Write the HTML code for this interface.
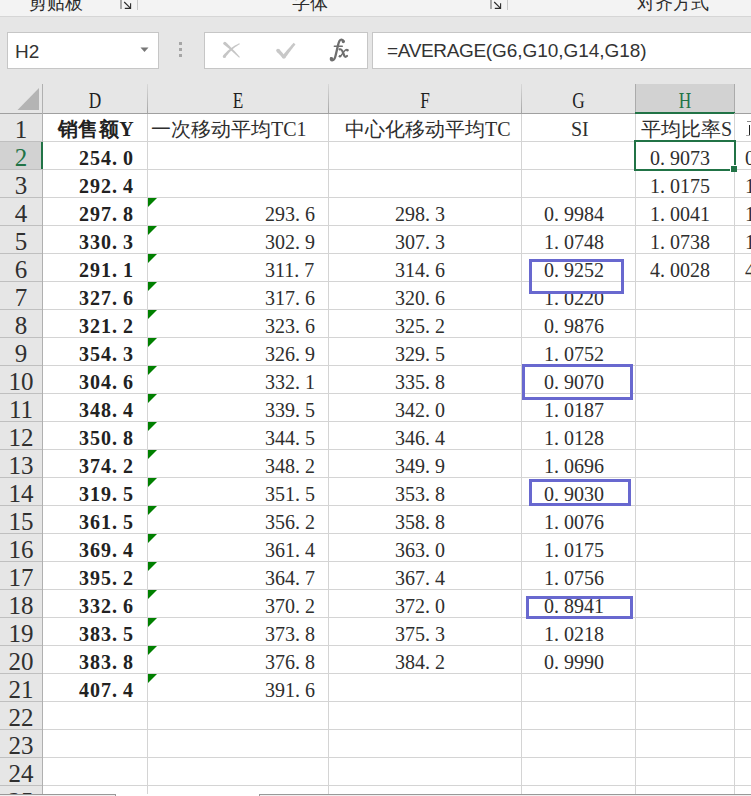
<!DOCTYPE html>
<html><head><meta charset="utf-8"><style>
*{margin:0;padding:0;box-sizing:border-box}
html,body{width:751px;height:796px;overflow:hidden;background:#e6e6e6;position:relative}
div,span{position:absolute}
.ui{font-family:"Liberation Sans",sans-serif}
.sr{font-family:"Liberation Serif",serif}
.rib{left:0;top:0;width:751px;height:17px;background:#f3f3f3;border-bottom:1px solid #d6d6d6}
.rt{font-size:18px;color:#2b2b2b;line-height:18px;top:-6px;white-space:nowrap}
.box{background:#fff;border:1px solid #c6c6c6}
.grid{left:43px;top:114px;width:708px;height:682px;background:#fff}
.vl{width:1px;background:#d4d4d4}
.hl{height:1px;background:#d4d4d4}
.rh{left:0;width:42px;height:27px;background:#e6e6e6;font-size:25px;line-height:31px;text-align:center;color:#1f1f1f}
.rhl{left:0;width:42px;height:1px;background:#bfbfbf}
.ch{top:86px;height:29px;font-size:24px;line-height:29px;text-align:center;color:#1f1f1f;transform:scaleX(0.72)}
.chs{top:84px;width:1px;height:29px;background:linear-gradient(#d8d8d8,#a6a6a6)}
.c{font-size:20px;line-height:28px;height:28px;white-space:nowrap;color:#2e2e2e}
.c i{font-style:normal;margin-right:5px}
.b{font-weight:bold;letter-spacing:1px;color:#222}
.tri{width:0;height:0;border-top:9px solid #008000;border-right:9px solid transparent}
.fm{top:37.6px;font-size:19px;line-height:26px;color:#333;white-space:nowrap}
.sel{border:3px solid #6868cf}
</style></head><body>

<div class="rib"></div>
<div class="ui rt" style="left:29px">剪贴板</div>
<div class="ui rt" style="left:292px">字体</div>
<div class="ui rt" style="left:637px">对齐方式</div>
<div style="left:120px;top:0;width:2px;height:9px;background:#a8a8a8"></div>
<svg style="position:absolute;left:123px;top:1px" width="10" height="10" viewBox="0 0 10 10"><path d="M1.2 1 L7.4 7.2 M1.8 7.4 H7.6 V2.2" fill="none" stroke="#2a2a2a" stroke-width="1.1"/></svg>
<div style="left:137px;top:0;width:1px;height:10px;background:#c8c8c8"></div>
<div style="left:490px;top:0;width:2px;height:9px;background:#a8a8a8"></div>
<svg style="position:absolute;left:493px;top:1px" width="10" height="10" viewBox="0 0 10 10"><path d="M1.2 1 L7.4 7.2 M1.8 7.4 H7.6 V2.2" fill="none" stroke="#2a2a2a" stroke-width="1.1"/></svg>
<div style="left:507px;top:0;width:1px;height:10px;background:#c8c8c8"></div>
<div class="box" style="left:7px;top:32px;width:152px;height:37px"></div>
<div class="ui" style="left:15px;top:39px;font-size:19px;line-height:26px;color:#333">H2</div>
<svg style="position:absolute;left:140px;top:47px" width="9" height="6"><path d="M0.5 0.5 H8.5 L4.5 5 Z" fill="#777"/></svg>
<div style="left:179px;top:42px;width:3px;height:3px;background:#a6a6a6"></div>
<div style="left:179px;top:48px;width:3px;height:3px;background:#a6a6a6"></div>
<div style="left:179px;top:54px;width:3px;height:3px;background:#a6a6a6"></div>
<div class="box" style="left:204px;top:32px;width:164px;height:37px"></div>
<svg style="position:absolute;left:220px;top:40px" width="24" height="20" viewBox="0 0 24 20"><g fill="#c6c6c6"><path d="M3.81 4.43 L4.75 5.17 L5.68 5.93 L6.62 6.69 L7.57 7.47 L8.51 8.27 L9.46 9.07 L10.41 9.89 L11.37 10.71 L12.32 11.56 L13.28 12.41 L14.25 13.27 L15.21 14.15 L16.18 15.04 L17.15 15.94 L18.13 16.86 L19.10 17.78 L19.90 17.02 L19.00 16.01 L18.11 15.01 L17.22 14.02 L16.33 13.04 L15.44 12.07 L14.55 11.11 L13.67 10.17 L12.78 9.24 L11.90 8.31 L11.02 7.40 L10.15 6.50 L9.27 5.61 L8.40 4.74 L7.53 3.87 L6.66 3.01 L5.79 2.17Z"/><path d="M5.50 17.40 L6.21 16.37 L6.95 15.37 L7.71 14.40 L8.49 13.45 L9.30 12.53 L10.13 11.64 L10.98 10.78 L11.86 9.94 L12.77 9.14 L13.70 8.35 L14.66 7.60 L15.64 6.87 L16.64 6.18 L17.68 5.51 L18.73 4.86 L19.82 4.25 L19.38 3.35 L18.21 3.87 L17.07 4.42 L15.94 5.00 L14.83 5.61 L13.74 6.26 L12.67 6.94 L11.62 7.66 L10.59 8.41 L9.58 9.19 L8.59 10.00 L7.62 10.85 L6.67 11.74 L5.75 12.65 L4.84 13.60 L3.96 14.59 L3.10 15.60Z"/><circle cx="4.8" cy="3.3" r="1.5"/><circle cx="4.3" cy="16.5" r="1.5"/></g></svg>
<svg style="position:absolute;left:274px;top:40px" width="24" height="20" viewBox="0 0 24 20"><g fill="#c8c8c8"><path d="M2.75 11.89 L3.74 12.83 L4.72 13.79 L5.69 14.79 L6.65 15.83 L7.61 16.90 L8.55 18.00 L11.05 16.00 L10.12 14.80 L9.17 13.64 L8.21 12.51 L7.24 11.41 L6.25 10.34 L5.25 9.31Z"/><path d="M11.04 18.28 L12.07 16.82 L13.10 15.38 L14.13 13.95 L15.17 12.54 L16.22 11.14 L17.26 9.76 L18.32 8.40 L19.37 7.05 L20.44 5.71 L21.50 4.39 L19.70 2.81 L18.53 4.07 L17.36 5.34 L16.20 6.63 L15.04 7.93 L13.88 9.26 L12.73 10.60 L11.58 11.95 L10.44 13.32 L9.30 14.71 L8.16 16.12Z"/><circle cx="9.8" cy="17.0" r="1.8"/><circle cx="4.0" cy="10.6" r="1.8"/></g></svg>
<svg style="position:absolute;left:326px;top:36px" width="26" height="28" viewBox="0 0 26 28"><g fill="none" stroke="#6e6e6e" stroke-linecap="round"><path d="M17.6 5.2 C16.8 3.2 14.6 3 13.4 5 C12.6 6.4 12.2 8.5 11.6 11 L9.6 19.5 C9 22.3 8 24.3 6.2 24.3 C5 24.3 4.6 23.2 5 22.3" stroke-width="2.3"/><path d="M8.3 10.2 H16.3" stroke-width="1.4"/><path d="M13.6 13.4 C15.5 12.8 16 14 17 16.5 L18.2 19.5 C18.8 21 19.6 21.2 21 20" stroke-width="2.2"/><path d="M21.8 13.8 C20.5 13 19.5 13.6 18 15.5 L15.5 19 C14.6 20.2 13.8 20.8 13.2 20.3" stroke-width="1.3"/></g><circle cx="17.3" cy="5.6" r="1.6" fill="#6e6e6e"/><circle cx="5.6" cy="22.6" r="1.6" fill="#6e6e6e"/><circle cx="21.4" cy="14.2" r="1.2" fill="#6e6e6e"/><circle cx="14" cy="20.2" r="1.2" fill="#6e6e6e"/></svg>
<div class="box" style="left:372px;top:32px;width:400px;height:37px"></div>
<div class="ui fm" style="left:387px;letter-spacing:-0.35px">=AVERAGE(</div>
<div class="ui fm" style="left:492px;letter-spacing:-0.05px">G6,G10,G14,G18)</div>
<div class="grid"></div>
<svg style="position:absolute;left:0;top:84px" width="42" height="29"><path d="M17.5 26 L39 4 L39 26 Z" fill="#b4b4b4"/></svg>
<div style="left:636px;top:84px;width:98px;height:29px;background:#d2d2d2"></div>
<div class="chs" style="left:42px"></div>
<div class="chs" style="left:147px"></div>
<div class="chs" style="left:328px"></div>
<div class="chs" style="left:521px"></div>
<div class="chs" style="left:635px;background:#ababab"></div>
<div class="chs" style="left:734px;background:#ababab"></div>
<div style="left:0;top:113px;width:635px;height:1px;background:#a0a0a0"></div>
<div style="left:635px;top:112px;width:100px;height:2px;background:#217346"></div>
<div style="left:734px;top:113px;width:17px;height:1px;background:#a0a0a0"></div>
<div class="sr ch" style="left:43px;width:104px;color:#1f1f1f">D</div>
<div class="sr ch" style="left:148px;width:180px;color:#1f1f1f">E</div>
<div class="sr ch" style="left:329px;width:192px;color:#1f1f1f">F</div>
<div class="sr ch" style="left:522px;width:113px;color:#1f1f1f">G</div>
<div class="sr ch" style="left:636px;width:98px;color:#217346">H</div>
<div class="sr ch" style="left:735px;width:99px;color:#1f1f1f">I</div>
<div class="vl" style="left:147px;top:114px;height:680px"></div>
<div class="vl" style="left:328px;top:114px;height:680px"></div>
<div class="vl" style="left:521px;top:114px;height:680px"></div>
<div class="vl" style="left:635px;top:114px;height:680px"></div>
<div class="vl" style="left:734px;top:114px;height:680px"></div>
<div style="left:42px;top:84px;width:1px;height:712px;background:#b0b0b0"></div>
<div class="hl" style="left:43px;top:141px;width:708px"></div>
<div class="rhl" style="top:141px"></div>
<div class="sr rh" style="top:114px;background:#e6e6e6;color:#303030">1</div>
<div class="hl" style="left:43px;top:169px;width:708px"></div>
<div class="rhl" style="top:169px"></div>
<div class="sr rh" style="top:142px;background:#d2d2d2;color:#217346">2</div>
<div class="hl" style="left:43px;top:197px;width:708px"></div>
<div class="rhl" style="top:197px"></div>
<div class="sr rh" style="top:170px;background:#e6e6e6;color:#303030">3</div>
<div class="hl" style="left:43px;top:225px;width:708px"></div>
<div class="rhl" style="top:225px"></div>
<div class="sr rh" style="top:198px;background:#e6e6e6;color:#303030">4</div>
<div class="hl" style="left:43px;top:253px;width:708px"></div>
<div class="rhl" style="top:253px"></div>
<div class="sr rh" style="top:226px;background:#e6e6e6;color:#303030">5</div>
<div class="hl" style="left:43px;top:281px;width:708px"></div>
<div class="rhl" style="top:281px"></div>
<div class="sr rh" style="top:254px;background:#e6e6e6;color:#303030">6</div>
<div class="hl" style="left:43px;top:309px;width:708px"></div>
<div class="rhl" style="top:309px"></div>
<div class="sr rh" style="top:282px;background:#e6e6e6;color:#303030">7</div>
<div class="hl" style="left:43px;top:337px;width:708px"></div>
<div class="rhl" style="top:337px"></div>
<div class="sr rh" style="top:310px;background:#e6e6e6;color:#303030">8</div>
<div class="hl" style="left:43px;top:365px;width:708px"></div>
<div class="rhl" style="top:365px"></div>
<div class="sr rh" style="top:338px;background:#e6e6e6;color:#303030">9</div>
<div class="hl" style="left:43px;top:393px;width:708px"></div>
<div class="rhl" style="top:393px"></div>
<div class="sr rh" style="top:366px;background:#e6e6e6;color:#303030">10</div>
<div class="hl" style="left:43px;top:421px;width:708px"></div>
<div class="rhl" style="top:421px"></div>
<div class="sr rh" style="top:394px;background:#e6e6e6;color:#303030">11</div>
<div class="hl" style="left:43px;top:449px;width:708px"></div>
<div class="rhl" style="top:449px"></div>
<div class="sr rh" style="top:422px;background:#e6e6e6;color:#303030">12</div>
<div class="hl" style="left:43px;top:477px;width:708px"></div>
<div class="rhl" style="top:477px"></div>
<div class="sr rh" style="top:450px;background:#e6e6e6;color:#303030">13</div>
<div class="hl" style="left:43px;top:505px;width:708px"></div>
<div class="rhl" style="top:505px"></div>
<div class="sr rh" style="top:478px;background:#e6e6e6;color:#303030">14</div>
<div class="hl" style="left:43px;top:533px;width:708px"></div>
<div class="rhl" style="top:533px"></div>
<div class="sr rh" style="top:506px;background:#e6e6e6;color:#303030">15</div>
<div class="hl" style="left:43px;top:561px;width:708px"></div>
<div class="rhl" style="top:561px"></div>
<div class="sr rh" style="top:534px;background:#e6e6e6;color:#303030">16</div>
<div class="hl" style="left:43px;top:589px;width:708px"></div>
<div class="rhl" style="top:589px"></div>
<div class="sr rh" style="top:562px;background:#e6e6e6;color:#303030">17</div>
<div class="hl" style="left:43px;top:617px;width:708px"></div>
<div class="rhl" style="top:617px"></div>
<div class="sr rh" style="top:590px;background:#e6e6e6;color:#303030">18</div>
<div class="hl" style="left:43px;top:645px;width:708px"></div>
<div class="rhl" style="top:645px"></div>
<div class="sr rh" style="top:618px;background:#e6e6e6;color:#303030">19</div>
<div class="hl" style="left:43px;top:673px;width:708px"></div>
<div class="rhl" style="top:673px"></div>
<div class="sr rh" style="top:646px;background:#e6e6e6;color:#303030">20</div>
<div class="hl" style="left:43px;top:701px;width:708px"></div>
<div class="rhl" style="top:701px"></div>
<div class="sr rh" style="top:674px;background:#e6e6e6;color:#303030">21</div>
<div class="hl" style="left:43px;top:729px;width:708px"></div>
<div class="rhl" style="top:729px"></div>
<div class="sr rh" style="top:702px;background:#e6e6e6;color:#303030">22</div>
<div class="hl" style="left:43px;top:757px;width:708px"></div>
<div class="rhl" style="top:757px"></div>
<div class="sr rh" style="top:730px;background:#e6e6e6;color:#303030">23</div>
<div class="hl" style="left:43px;top:785px;width:708px"></div>
<div class="rhl" style="top:785px"></div>
<div class="sr rh" style="top:758px;background:#e6e6e6;color:#303030">24</div>
<div class="hl" style="left:43px;top:813px;width:708px"></div>
<div class="rhl" style="top:813px"></div>
<div class="sr rh" style="top:786px;background:#e6e6e6;color:#303030">25</div>
<div style="left:41px;top:142px;width:2px;height:27px;background:#217346"></div>
<div class="sr c b" style="top:115px;left:58px"><span style="position:static;letter-spacing:0.4px">销售额Y</span></div>
<div class="sr c " style="top:115px;left:151px">一次移动平均TC1</div>
<div class="sr c " style="top:115px;left:345px">中心化移动平均TC</div>
<div class="sr c " style="top:115px;left:571px">SI</div>
<div class="sr c " style="top:115px;left:641px">平均比率S</div>
<div class="sr c b" style="top:144px;left:79px">254<i>.</i>0</div>
<div class="sr c b" style="top:172px;left:79px">292<i>.</i>4</div>
<div class="sr c b" style="top:200px;left:79px">297<i>.</i>8</div>
<div class="sr c b" style="top:228px;left:79px">330<i>.</i>3</div>
<div class="sr c b" style="top:256px;left:79px">291<i>.</i>1</div>
<div class="sr c b" style="top:284px;left:79px">327<i>.</i>6</div>
<div class="sr c b" style="top:312px;left:79px">321<i>.</i>2</div>
<div class="sr c b" style="top:340px;left:79px">354<i>.</i>3</div>
<div class="sr c b" style="top:368px;left:79px">304<i>.</i>6</div>
<div class="sr c b" style="top:396px;left:79px">348<i>.</i>4</div>
<div class="sr c b" style="top:424px;left:79px">350<i>.</i>8</div>
<div class="sr c b" style="top:452px;left:79px">374<i>.</i>2</div>
<div class="sr c b" style="top:480px;left:79px">319<i>.</i>5</div>
<div class="sr c b" style="top:508px;left:79px">361<i>.</i>5</div>
<div class="sr c b" style="top:536px;left:79px">369<i>.</i>4</div>
<div class="sr c b" style="top:564px;left:79px">395<i>.</i>2</div>
<div class="sr c b" style="top:592px;left:79px">332<i>.</i>6</div>
<div class="sr c b" style="top:620px;left:79px">383<i>.</i>5</div>
<div class="sr c b" style="top:648px;left:79px">383<i>.</i>8</div>
<div class="sr c b" style="top:676px;left:79px">407<i>.</i>4</div>
<div class="sr c " style="top:200px;left:265px">293<i>.</i>6</div>
<div class="tri" style="left:148px;top:198px"></div>
<div class="sr c " style="top:228px;left:265px">302<i>.</i>9</div>
<div class="tri" style="left:148px;top:226px"></div>
<div class="sr c " style="top:256px;left:265px">311<i>.</i>7</div>
<div class="tri" style="left:148px;top:254px"></div>
<div class="sr c " style="top:284px;left:265px">317<i>.</i>6</div>
<div class="tri" style="left:148px;top:282px"></div>
<div class="sr c " style="top:312px;left:265px">323<i>.</i>6</div>
<div class="tri" style="left:148px;top:310px"></div>
<div class="sr c " style="top:340px;left:265px">326<i>.</i>9</div>
<div class="tri" style="left:148px;top:338px"></div>
<div class="sr c " style="top:368px;left:265px">332<i>.</i>1</div>
<div class="tri" style="left:148px;top:366px"></div>
<div class="sr c " style="top:396px;left:265px">339<i>.</i>5</div>
<div class="tri" style="left:148px;top:394px"></div>
<div class="sr c " style="top:424px;left:265px">344<i>.</i>5</div>
<div class="tri" style="left:148px;top:422px"></div>
<div class="sr c " style="top:452px;left:265px">348<i>.</i>2</div>
<div class="tri" style="left:148px;top:450px"></div>
<div class="sr c " style="top:480px;left:265px">351<i>.</i>5</div>
<div class="tri" style="left:148px;top:478px"></div>
<div class="sr c " style="top:508px;left:265px">356<i>.</i>2</div>
<div class="tri" style="left:148px;top:506px"></div>
<div class="sr c " style="top:536px;left:265px">361<i>.</i>4</div>
<div class="tri" style="left:148px;top:534px"></div>
<div class="sr c " style="top:564px;left:265px">364<i>.</i>7</div>
<div class="tri" style="left:148px;top:562px"></div>
<div class="sr c " style="top:592px;left:265px">370<i>.</i>2</div>
<div class="tri" style="left:148px;top:590px"></div>
<div class="sr c " style="top:620px;left:265px">373<i>.</i>8</div>
<div class="tri" style="left:148px;top:618px"></div>
<div class="sr c " style="top:648px;left:265px">376<i>.</i>8</div>
<div class="tri" style="left:148px;top:646px"></div>
<div class="sr c " style="top:676px;left:265px">391<i>.</i>6</div>
<div class="tri" style="left:148px;top:674px"></div>
<div class="sr c " style="top:200px;left:395px">298<i>.</i>3</div>
<div class="sr c " style="top:228px;left:395px">307<i>.</i>3</div>
<div class="sr c " style="top:256px;left:395px">314<i>.</i>6</div>
<div class="sr c " style="top:284px;left:395px">320<i>.</i>6</div>
<div class="sr c " style="top:312px;left:395px">325<i>.</i>2</div>
<div class="sr c " style="top:340px;left:395px">329<i>.</i>5</div>
<div class="sr c " style="top:368px;left:395px">335<i>.</i>8</div>
<div class="sr c " style="top:396px;left:395px">342<i>.</i>0</div>
<div class="sr c " style="top:424px;left:395px">346<i>.</i>4</div>
<div class="sr c " style="top:452px;left:395px">349<i>.</i>9</div>
<div class="sr c " style="top:480px;left:395px">353<i>.</i>8</div>
<div class="sr c " style="top:508px;left:395px">358<i>.</i>8</div>
<div class="sr c " style="top:536px;left:395px">363<i>.</i>0</div>
<div class="sr c " style="top:564px;left:395px">367<i>.</i>4</div>
<div class="sr c " style="top:592px;left:395px">372<i>.</i>0</div>
<div class="sr c " style="top:620px;left:395px">375<i>.</i>3</div>
<div class="sr c " style="top:648px;left:395px">384<i>.</i>2</div>
<div class="sr c " style="top:200px;left:544px">0<i>.</i>9984</div>
<div class="sr c " style="top:228px;left:544px">1<i>.</i>0748</div>
<div class="sr c " style="top:256px;left:544px">0<i>.</i>9252</div>
<div class="sr c " style="top:284px;left:544px">1<i>.</i>0220</div>
<div class="sr c " style="top:312px;left:544px">0<i>.</i>9876</div>
<div class="sr c " style="top:340px;left:544px">1<i>.</i>0752</div>
<div class="sr c " style="top:368px;left:544px">0<i>.</i>9070</div>
<div class="sr c " style="top:396px;left:544px">1<i>.</i>0187</div>
<div class="sr c " style="top:424px;left:544px">1<i>.</i>0128</div>
<div class="sr c " style="top:452px;left:544px">1<i>.</i>0696</div>
<div class="sr c " style="top:480px;left:544px">0<i>.</i>9030</div>
<div class="sr c " style="top:508px;left:544px">1<i>.</i>0076</div>
<div class="sr c " style="top:536px;left:544px">1<i>.</i>0175</div>
<div class="sr c " style="top:564px;left:544px">1<i>.</i>0756</div>
<div class="sr c " style="top:592px;left:544px">0<i>.</i>8941</div>
<div class="sr c " style="top:620px;left:544px">1<i>.</i>0218</div>
<div class="sr c " style="top:648px;left:544px">0<i>.</i>9990</div>
<div class="sr c " style="top:144px;left:650px">0<i>.</i>9073</div>
<div class="sr c " style="top:172px;left:650px">1<i>.</i>0175</div>
<div class="sr c " style="top:200px;left:650px">1<i>.</i>0041</div>
<div class="sr c " style="top:228px;left:650px">1<i>.</i>0738</div>
<div class="sr c " style="top:256px;left:650px">4<i>.</i>0028</div>
<div class="sr c " style="top:144px;left:745px">0</div>
<div class="sr c " style="top:172px;left:745px">1</div>
<div class="sr c " style="top:200px;left:745px">1</div>
<div class="sr c " style="top:228px;left:745px">1</div>
<div class="sr c " style="top:256px;left:745px">4</div>
<div style="left:747px;top:121px;width:4px;height:1px;background:#8a8a8a"></div>
<div style="left:749px;top:125px;width:1px;height:11px;background:#222"></div>
<div style="left:746px;top:135px;width:4px;height:1px;background:#aaa"></div>
<div style="left:634px;top:140px;width:102px;height:31px;border:2px solid #217346"></div>
<div style="left:730px;top:165px;width:7px;height:7px;background:#fff"></div>
<div style="left:731px;top:166px;width:6px;height:6px;background:#217346"></div>
<div class="sel" style="left:529px;top:259px;width:95px;height:35px"></div>
<div class="sel" style="left:522px;top:364px;width:111px;height:36px"></div>
<div class="sel" style="left:529px;top:479px;width:102px;height:27px"></div>
<div class="sel" style="left:526px;top:596px;width:107px;height:23px"></div>
<div style="left:0;top:794px;width:116px;height:2px;border-top:1px solid #999;border-right:1px solid #999;background:#f0f0f0"></div>
<div style="left:259px;top:794px;width:500px;height:2px;border-top:1px solid #999;border-left:1px solid #999;background:#f0f0f0"></div>
</body></html>
